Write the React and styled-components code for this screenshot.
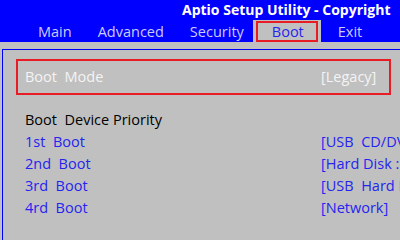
import React from 'react';
import styled, { createGlobalStyle } from 'styled-components';

const BLUE = '#0000ff';
const GRAY = '#c0c0c0';
const RED = '#e81c24';
const LINK = '#2424f0';

const GlobalStyle = createGlobalStyle`
  html, body {
    margin: 0;
    padding: 0;
    background: ${GRAY};
  }
  body {
    width: 400px;
    height: 240px;
    overflow: hidden;
    font-family: "Open Sans", "Liberation Sans", sans-serif;
  }
`;

const Screen = styled.div`
  width: 400px;
  height: 240px;
  overflow: hidden;
  display: flex;
  flex-direction: column;
  background: ${GRAY};
`;

const Header = styled.header`
  background: ${BLUE};
  height: 42px;
  display: flex;
  flex-direction: column;
`;

const Title = styled.div`
  height: 20px;
  padding-left: 182px;
  color: #fff;
  font-weight: 700;
  font-size: 14px;
  line-height: 20px;
  white-space: nowrap;
`;

const Tabs = styled.nav`
  display: flex;
  align-items: stretch;
  height: 22px;
  padding-left: 25px;
`;

const Tab = styled.div`
  display: flex;
  align-items: center;
  padding: ${p => (p.$active ? '1px 3px 0' : '0 13px')};
  margin: ${p => (p.$active ? '0 4px 0 -4px' : '0')};
  background: ${p => (p.$active ? GRAY : 'transparent')};
  color: ${p => (p.$active ? LINK : '#ccccff')};
  font-size: 14.5px;
  white-space: nowrap;
`;

const TabFrame = styled.span`
  display: flex;
  align-items: center;
  height: 100%;
  box-sizing: border-box;
  border: 2px solid ${RED};
  padding: 0 12px 0 14px;
`;

const Panel = styled.section`
  margin: 7px 0 0 2px;
  flex: 1;
  border-top: 1px solid ${BLUE};
  border-left: 1px solid ${BLUE};
  padding: 9px 0 0 13px;
  display: flex;
  flex-direction: column;
`;

const Row = styled.div`
  display: grid;
  grid-template-columns: 296px 1fr;
  height: 22px;
  align-items: center;
  font-size: 14.5px;
  white-space: pre;
  color: ${p => p.$color || LINK};
  overflow: hidden;
`;

const Highlight = styled.div`
  width: 375px;
  height: 36px;
  box-sizing: border-box;
  border: 2px solid ${RED};
  padding: 0 0 2px 7px;
  display: flex;
  align-items: center;
  margin-bottom: 13px;
`;

const Section = styled.div`
  padding-left: 9px;
  display: flex;
  flex-direction: column;
`;

const bootOrder = [
  ['1st  Boot', '[USB  CD/DVD:  Generic]'],
  ['2nd  Boot', '[Hard Disk : WDC]'],
  ['3rd  Boot', '[USB  Hard Disk]'],
  ['4rd  Boot', '[Network]'],
];

export default function App() {
  return (
    <Screen>
      <GlobalStyle />
      <Header>
        <Title>Aptio Setup Utility - Copyright</Title>
        <Tabs>
          <Tab>Main</Tab>
          <Tab>Advanced</Tab>
          <Tab>Security</Tab>
          <Tab $active><TabFrame>Boot</TabFrame></Tab>
          <Tab>Exit</Tab>
        </Tabs>
      </Header>
      <Panel>
        <Highlight>
          <Row $color="#f4f4f4" style={{ width: '100%' }}>
            <span>Boot  Mode</span>
            <span>[Legacy]</span>
          </Row>
        </Highlight>
        <Section>
          <Row $color="#000">
            <span>Boot  Device Priority</span>
          </Row>
          {bootOrder.map(([label, value]) => (
            <Row key={label}>
              <span>{label}</span>
              <span>{value}</span>
            </Row>
          ))}
        </Section>
      </Panel>
    </Screen>
  );
}
